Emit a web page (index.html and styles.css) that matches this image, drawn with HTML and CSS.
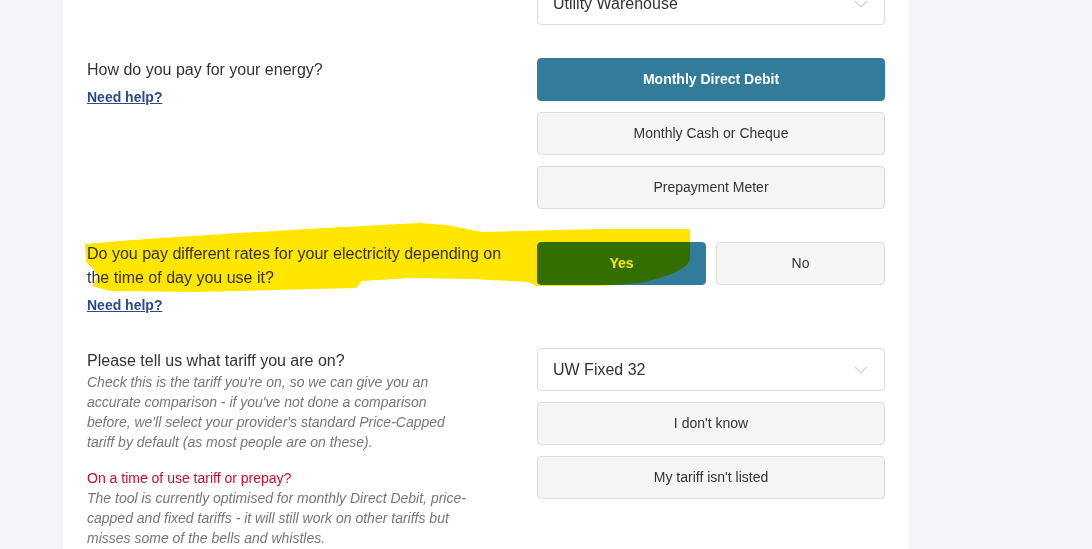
FILE: index.html
```html
<!DOCTYPE html>
<html>
<head>
<meta charset="utf-8">
<link rel="stylesheet" href="styles.css">
</head>
<body>
<div class="panel">
  <div class="row row-first">
    <div class="left"></div>
    <div class="right">
      <div class="select"><span>Utility Warehouse</span>
        <svg class="chev" width="14" height="8" viewBox="0 0 14 8"><path d="M1 1 L7 7 L13 1" fill="none" stroke="#cfcfcf" stroke-width="1.2"/></svg>
      </div>
    </div>
  </div>

  <div class="row">
    <div class="left">
      <div class="question">How do you pay for your energy?</div>
      <a class="help" href="#">Need help?</a>
    </div>
    <div class="right stack">
      <div class="btn btn-active">Monthly Direct Debit</div>
      <div class="btn">Monthly Cash or Cheque</div>
      <div class="btn">Prepayment Meter</div>
    </div>
  </div>

  <div class="row">
    <div class="left">
      <div class="question">Do you pay different rates for your electricity depending on the time of day you use it?</div>
      <a class="help" href="#">Need help?</a>
    </div>
    <div class="right pair">
      <div class="btn btn-active">Yes</div>
      <div class="btn">No</div>
    </div>
  </div>

  <div class="row">
    <div class="left">
      <div class="question q-tight">Please tell us what tariff you are on?</div>
      <p class="note">Check this is the tariff you're on, so we can give you an accurate comparison - if you've not done a comparison before, we'll select your provider's standard Price-Capped tariff by default (as most people are on these).</p>
      <div class="warn">On a time of use tariff or prepay?</div>
      <p class="note">The tool is currently optimised for monthly Direct Debit, price-capped and fixed tariffs - it will still work on other tariffs but misses some of the bells and whistles.</p>
    </div>
    <div class="right stack">
      <div class="select"><span>UW Fixed 32</span>
        <svg class="chev" width="14" height="8" viewBox="0 0 14 8"><path d="M1 1 L7 7 L13 1" fill="none" stroke="#cfcfcf" stroke-width="1.2"/></svg>
      </div>
      <div class="btn">I don't know</div>
      <div class="btn">My tariff isn't listed</div>
    </div>
  </div>
</div>

<svg class="marker" width="1092" height="549" viewBox="0 0 1092 549">
  <path d="M85,244 C150,238 300,229 420,223 L446,225 L482,232 L600,229 L690,229 L690,258 C689,268 672,276 640,283 L600,286 L536,286 L528,282 L470,279 L410,278 L362,281 L356,288 L200,292 L110,291 L92,286 L98,276 L92,268 L86,262 Z" fill="#ffe600"/>
</svg>
</body>
</html>
```

FILE: styles.css
```css
html, body {
  margin: 0;
  padding: 0;
}
body {
  position: relative;
  background: #f3f5f9;
  font-family: "Liberation Sans", Arial, sans-serif;
  color: #333;
  height: 549px;
  overflow: hidden;
}
.panel {
  margin-left: 63px;
  width: 846px;
  min-height: 549px;
  background: #fff;
  box-sizing: border-box;
  padding: 0 24px;
  display: flex;
  flex-direction: column;
  gap: 33px;
}
.row {
  display: grid;
  grid-template-columns: 426px 348px;
  column-gap: 24px;
  align-items: start;
}
.row-first {
  margin-top: -18px;
}
.question {
  font-size: 16px;
  line-height: 24px;
}
.q-tight {
  line-height: 22px;
  margin-top: 2px;
}
.help {
  display: inline-block;
  margin-top: 5px;
  font-size: 14px;
  line-height: 20px;
  font-weight: bold;
  color: #2b4a8e;
  text-decoration: underline;
}
.note {
  margin: 0;
  max-width: 382px;
  font-size: 14px;
  line-height: 20px;
  font-style: italic;
  color: #777;
}
.warn {
  margin-top: 16px;
  font-size: 14px;
  line-height: 20px;
  color: #c8102e;
}
.stack {
  display: flex;
  flex-direction: column;
  gap: 11px;
}
.pair {
  display: grid;
  grid-template-columns: 1fr 1fr;
  column-gap: 10px;
}
.btn {
  height: 43px;
  box-sizing: border-box;
  border: 1px solid #dcdcdc;
  border-radius: 4px;
  background: #f5f5f5;
  display: flex;
  align-items: center;
  justify-content: center;
  padding-bottom: 2px;
  font-size: 14px;
  color: #333;
}
.btn-active {
  background: #337b9b;
  border-color: #337b9b;
  color: #fff;
  font-weight: bold;
}
.select {
  height: 43px;
  box-sizing: border-box;
  border: 1px solid #dcdcdc;
  border-radius: 4px;
  background: #fff;
  display: flex;
  align-items: center;
  justify-content: space-between;
  padding: 0 16px 0 15px;
  font-size: 16px;
  color: #333;
}
.chev {
  display: block;
}
.marker {
  position: absolute;
  top: 0;
  left: 0;
  pointer-events: none;
  mix-blend-mode: multiply;
}
```
